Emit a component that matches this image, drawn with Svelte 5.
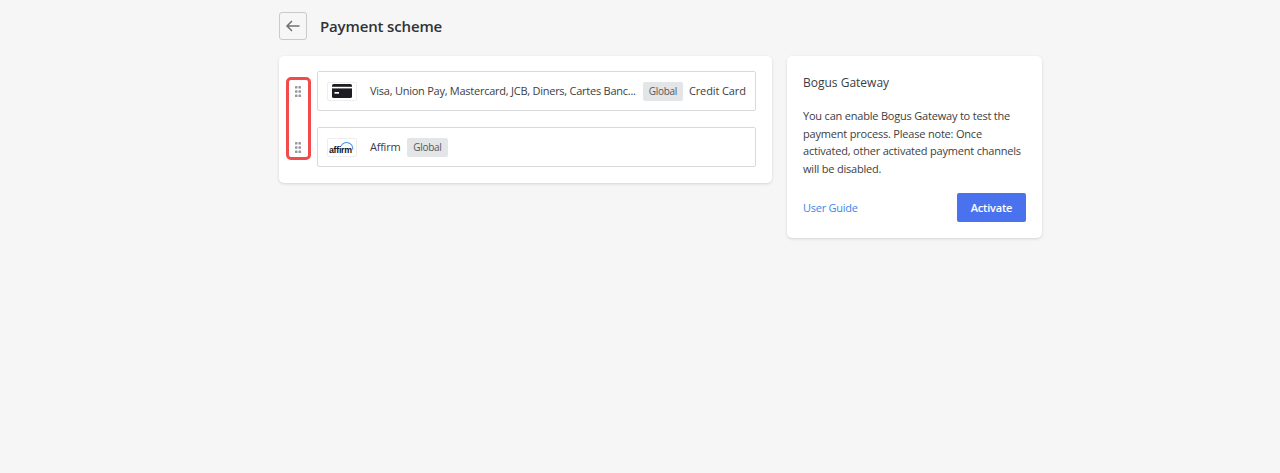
<script>
  const channels = [
    { logo: 'card', name: 'Visa, Union Pay, Mastercard, JCB, Diners, Cartes Banc...', region: 'Global', kind: 'Credit Card' },
    { logo: 'affirm', name: 'Affirm', region: 'Global', kind: '' },
  ]
</script>

<div class="page">
  <header class="head">
    <button class="back" aria-label="Back">
      <svg viewBox="0 0 16 16" width="16" height="16" fill="none"><path d="M14.5 8H2M7 3 2 8l5 5" stroke="currentColor" stroke-width="1.5"/></svg>
    </button>
    <h1>Payment scheme</h1>
  </header>

  <div class="columns">
    <section class="card list">
      <div class="marker"></div>
      {#each channels as ch}
        <div class="line">
          <div class="handle">
            <svg viewBox="0 0 6 11" width="6" height="11" fill="#96989c">
              {#each [0, 4.25, 8.5] as y}
                <rect x="0" {y} width="2.5" height="2.5" rx="0.6" />
                <rect x="3.5" {y} width="2.5" height="2.5" rx="0.6" />
              {/each}
            </svg>
          </div>
          <div class="row">
            <div class="logo">
              {#if ch.logo === 'card'}
                <svg viewBox="0 0 20 14" width="20" height="14">
                  <rect width="20" height="14" rx="1.6" fill="#1d1d22" />
                  <rect y="2.8" width="20" height="1.6" fill="#fff" />
                  <rect x="2.5" y="8" width="4.5" height="1.7" fill="#fff" />
                </svg>
              {:else}
                <svg viewBox="0 0 28 14" width="26" height="13">
                  <path d="M13 5.2C15 1.6 19 .9 22 2.4c2.6 1.3 3.8 3.8 3.6 7" fill="none" stroke="#4a90f0" stroke-width="1.1" />
                  <text x="0" y="13" class="wordmark">affirm</text>
                </svg>
              {/if}
            </div>
            <span class="name">{ch.name}</span>
            <span class="tag">{ch.region}</span>
            {#if ch.kind}<span class="kind">{ch.kind}</span>{/if}
          </div>
        </div>
      {/each}
    </section>

    <aside class="card side">
      <h2>Bogus Gateway</h2>
      <p>You can enable Bogus Gateway to test the payment process. Please note: Once activated, other activated payment channels will be disabled.</p>
      <div class="foot">
        <span class="guide">User Guide</span>
        <button class="activate">Activate</button>
      </div>
    </aside>
  </div>
</div>

<style>
  :global(body) {
    background: #f6f6f6;
    font-family: "Open Sans", "Noto Sans", sans-serif;
  }
  .page { width: 763px; margin-left: 279px; padding-top: 12px; min-height: 461px; }

  .head { display: flex; align-items: center; gap: 13px; height: 28px; margin-bottom: 16px; }
  .back {
    width: 28px; height: 28px; padding: 0; display: flex; align-items: center; justify-content: center;
    background: #f6f6f6; border: 1px solid #c9cacc; border-radius: 3px; color: #6f7175;
  }
  h1 { margin: 0; font-size: 15px; font-weight: 600; color: #303236; letter-spacing: -0.15px; }

  .columns { display: flex; align-items: flex-start; gap: 15px; }
  .card { background: #fff; border-radius: 5px; box-shadow: 0 1px 3px rgba(0, 0, 0, 0.14); }

  .list { position: relative; width: 493px; padding: 15px 16px 16px 7px; box-sizing: border-box; display: flex; flex-direction: column; gap: 16px; }
  .marker {
    position: absolute; left: 7px; top: 21px; width: 25px; height: 83px; box-sizing: border-box;
    border: 3px solid #f24b4b; border-radius: 5px;
  }
  .line { display: flex; align-items: center; }
  .handle { width: 24px; margin-right: 7px; flex-shrink: 0; display: flex; justify-content: center; }
  .row {
    flex: 1; min-width: 0; height: 40px; box-sizing: border-box; display: flex; align-items: center;
    border: 1px solid #d9dadc; border-radius: 2px; padding: 0 10px 0 9px;
    font-size: 11px; color: #3c3e42;
  }
  .logo {
    width: 30px; height: 19px; box-sizing: border-box; flex-shrink: 0; margin-right: 13px; display: flex; align-items: center; justify-content: center;
    border: 1px solid #eeeeef; border-radius: 2px;
  }
  .logo svg { flex-shrink: 0; }
  .wordmark { font-size: 9.5px; font-weight: 700; fill: #15151c; letter-spacing: -0.3px; font-family: "Liberation Sans", sans-serif; }
  .name { white-space: nowrap; letter-spacing: -0.25px; margin-bottom: 1px; }
  .tag {
    flex-shrink: 0; margin-left: 7px; padding: 0 6px; height: 19px; line-height: 19px;
    background: #e4e5e7; border-radius: 2px; font-size: 10px; color: #55575b; letter-spacing: -0.3px;
  }
  .kind { flex-shrink: 0; margin-left: 6px; margin-bottom: 1px; white-space: nowrap; letter-spacing: -0.12px; }

  .side { width: 255px; padding: 18px 16px 16px; box-sizing: border-box; color: #3c3e42; }
  h2 { margin: 0 0 16px; font-size: 12px; line-height: 17px; font-weight: 400; }
  p { margin: 0 0 16px; font-size: 11px; line-height: 17.6px; letter-spacing: -0.2px; }
  .foot { display: flex; align-items: center; justify-content: space-between; }
  .guide { color: #3d86e8; font-size: 11px; letter-spacing: -0.25px; }
  .activate {
    width: 69px; height: 29px; padding: 0; border: none; border-radius: 2px;
    background: #4a72ee; color: #fff; font: 600 11px "Open Sans", sans-serif; letter-spacing: -0.2px;
  }
</style>
